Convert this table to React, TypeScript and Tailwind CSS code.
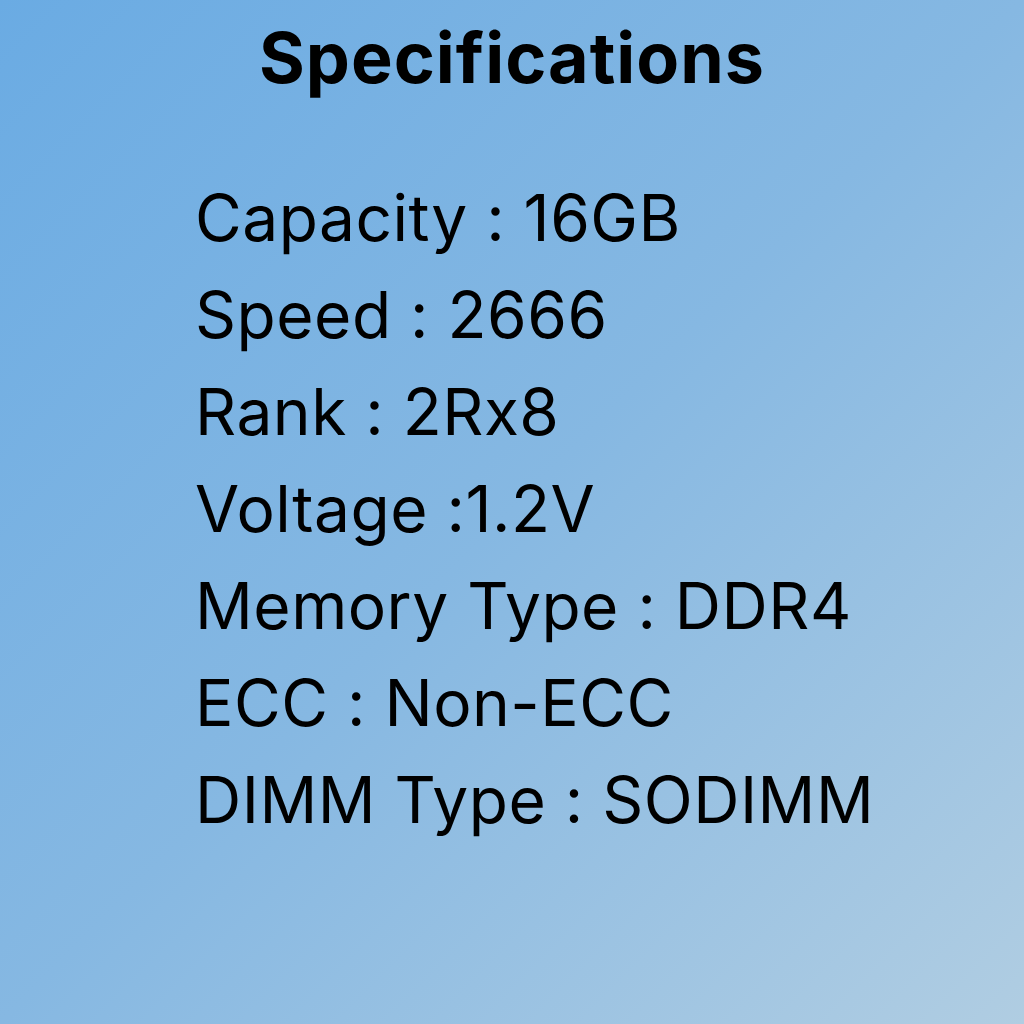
export default function App() {
  return (
    <div className="w-[1024px] h-[1024px] bg-gradient-to-br from-[#6aabe3] via-[#86b8e2] to-[#b0cde2] font-['Inter',sans-serif] text-black overflow-hidden">
      <h1 className="pt-[16px] text-center text-[70px] leading-[84px] font-bold tracking-[1px]">Specifications</h1>
      <ul className="mt-[69px] pl-[195px] text-[64px] leading-[97px] tracking-[0.5px]">
        <li>Capacity : 16GB</li>
        <li>Speed : 2666</li>
        <li>Rank : 2Rx8</li>
        <li>Voltage :1.2V</li>
        <li>Memory Type : DDR4</li>
        <li>ECC : Non-ECC</li>
        <li>DIMM Type : SODIMM</li>
      </ul>
    </div>
  );
}
